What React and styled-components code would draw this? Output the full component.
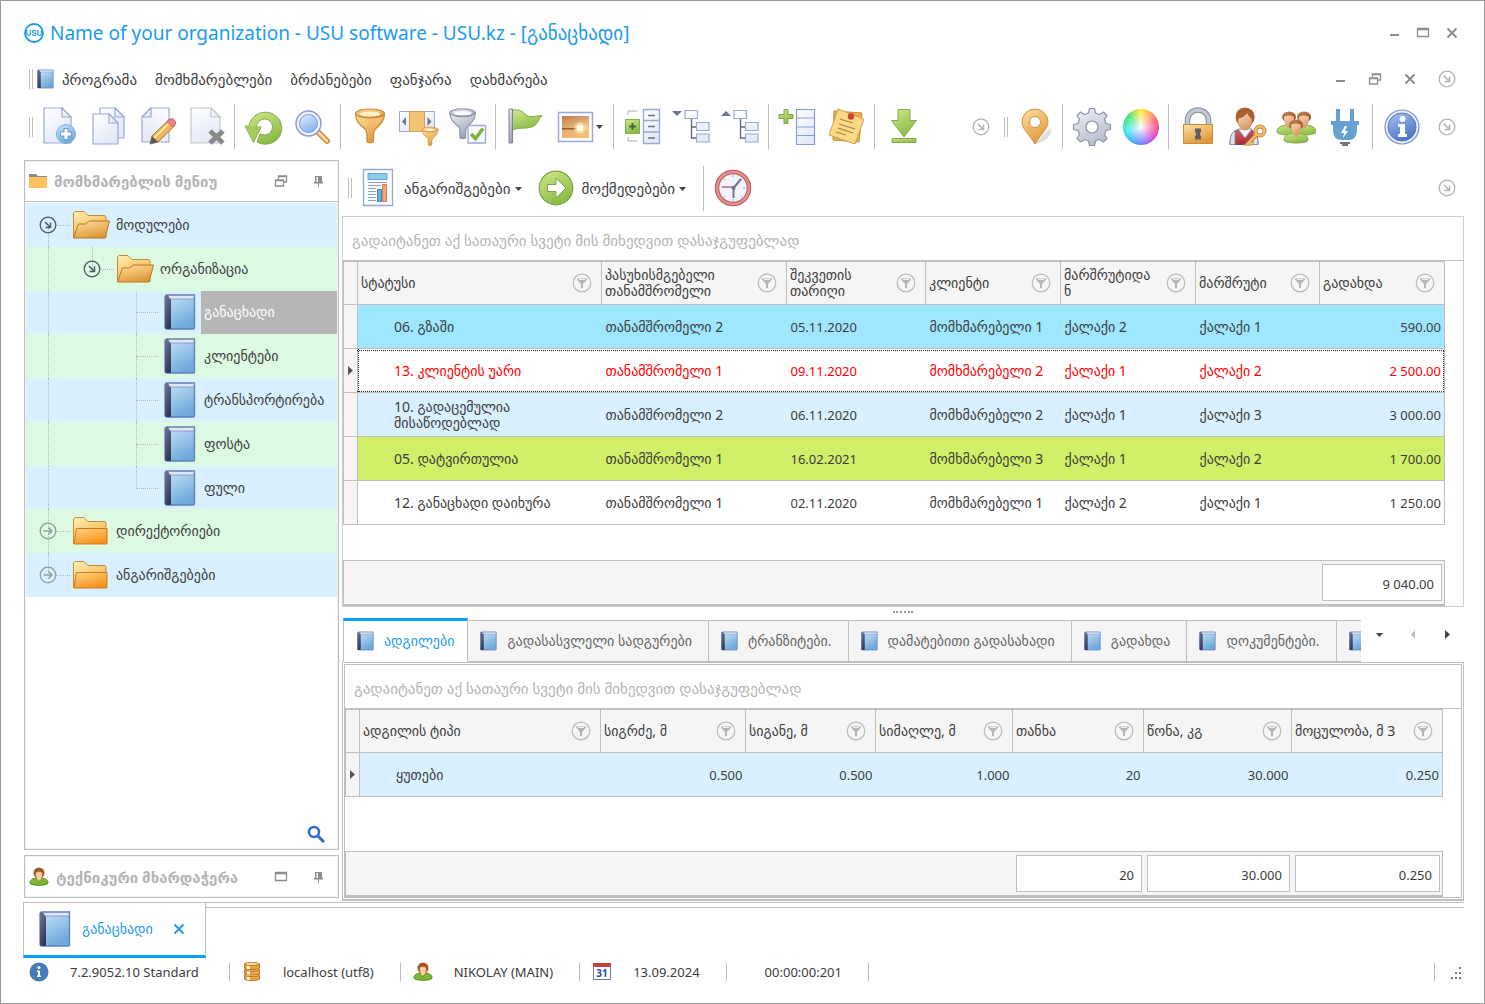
import React from 'react'
import styled, { createGlobalStyle, css } from 'styled-components'

const color = {
  text: '#3c3c3c',
  muted: '#b4b4b4',
  icon: '#8c8c8c',
  line: '#bfbfbf',
  accent: '#00a2ff',
  accentText: '#1b9cf0',
  bar: '#f5f5f5',
  blueRow: '#d8f0ff',
  greenRow: '#dcfae2'
}

const size = {
  number: '13px',
  label: '14px',
  menu: '15px'
}

const GlobalStyle = createGlobalStyle`
  * { box-sizing: border-box; }
  body {
    margin: 0;
    background: #fff;
    color: ${color.text};
    font: ${size.number}/16px "Noto Sans", "DejaVu Sans", sans-serif;
  }
  button {
    margin: 0;
    padding: 0;
    border: 0;
    background: none;
    color: inherit;
    font: inherit;
    white-space: nowrap;
  }
  svg { display: block; flex: none; }
`

/* ---------- icons ---------- */

const gradients = {
  page: ['#ffffff', '#e3e9f7'],
  blue: ['#cbe7fa', '#6fa8da'],
  glass: ['#e4f1ff', '#86b5f0'],
  spine: ['#6f7898', '#33395c'],
  orange: ['#ffe0a0', '#e09a3c'],
  folder: ['#ffd584', '#f7931e'],
  back: ['#fff0b8', '#f0b040'],
  green: ['#cfe890', '#8dbb45'],
  gray: ['#eef0f5', '#9aa1b2'],
  gear: ['#eef1f6', '#b9c0cd'],
  info: ['#a9c2ee', '#4f78c8'],
  photo: ['#c07850', '#ffe09a'],
  skin: ['#f7d9b6', '#d99a68'],
  hair: ['#c98a55', '#8c4a22'],
  red: ['#d8606a', '#a82c38']
}

const Defs = () => (
  <svg width='0' height='0' aria-hidden='true' style={{ position: 'absolute' }}>
    <defs>
      {Object.entries(gradients).map(([id, [from, to]]) => (
        <linearGradient key={id} id={id} x1='0' y1='0' x2='0.5' y2='1'>
          <stop offset='0' stopColor={from} />
          <stop offset='1' stopColor={to} />
        </linearGradient>
      ))}
    </defs>
  </svg>
)

const Icon = ({ w = 40, h = w, box = `0 0 ${w} ${h}`, children }) => (
  <svg width={w} height={h} viewBox={box} fill='none' aria-hidden='true'>{children}</svg>
)

const Page = ({ x = 4, y = 1, w = 27, h = 35, stroke = '#9ba8d3' }) => (
  <g fill='url(#page)' stroke={stroke} strokeWidth='1.2' strokeLinejoin='round'>
    <path d={`M${x} ${y}h${w - 9}l9 9v${h - 9}h${-w}z`} />
    <path d={`M${x + w - 9} ${y}v9h9z`} />
  </g>
)

const Funnel = ({ fill = 'url(#orange)', rim = '#fff0cc', stroke = '#c98a3a', transform }) => (
  <g transform={transform} stroke={stroke} strokeWidth='1.2' strokeLinejoin='round'>
    <path d='M5.500 7C5.500 14 10 18 15 22C17 24 17 26 17 34C17 36.500 23.500 36.500 23.500 34C23.500 26 23.500 24 25.500 22C30.500 18 34.500 14 34.500 7z' fill={fill} />
    <ellipse cx='20' cy='6.500' rx='14.500' ry='4.500' fill={fill} />
    <ellipse cx='20' cy='7' rx='10.500' ry='2.500' fill={rim} stroke='none' />
  </g>
)

const AddIcon = () => (
  <Icon>
    <Page />
    <circle cx='26' cy='27' r='9.500' fill='url(#blue)' stroke='#7fb0de' />
    <path d='M26 21v12M20 27h12' stroke='#6f9fd0' strokeWidth='5' />
    <path d='M26 22v10M21 27h10' stroke='#fff' strokeWidth='3' />
  </Icon>
)
const CopyIcon = () => (
  <Icon><Page x={11} y={1} w={24} h={30} /><Page x={4} y={7} w={25} h={30} /></Icon>
)
const EditIcon = () => (
  <Icon>
    <g transform='translate(36 0) scale(-1 1)'><Page x={5} y={1} w={27} h={34} /></g>
    <path d='M12 37l2-8l17-16.500l6 6L20 35z' fill='#f0b35c' stroke='#b07a35' />
    <path d='M16 31L33 14.500' stroke='#ffe2a0' strokeWidth='2' />
    <path d='M12 37l2-8l6 6z' fill='#555a66' />
    <path d='M29 14.500l4-3c3 0 5 3 4.500 5.500l-3 3z' fill='#e8848a' stroke='#c4636a' />
  </Icon>
)
const DeleteIcon = () => (
  <Icon>
    <Page x={4} y={1} w={29} h={35} stroke='#c6c6c6' />
    <path d='M23 24l13 12M36 24L23 36' stroke='#8a8a8a' strokeWidth='5' />
  </Icon>
)
const RefreshIcon = () => (
  <Icon>
    <path d='M13 35A16.500 16 0 1 0 5 19H1L9.500 35.500L17 20H12.500A8 8 0 1 1 20.500 28L16 27z' fill='url(#green)' stroke='#86ab4a' strokeLinejoin='round' />
    <path d='M1.500 19.500h15L9.500 35z' fill='#a6ca60' />
  </Icon>
)
const SearchIcon = () => (
  <Icon>
    <path d='M26 26l8 8' stroke='#c98a3a' strokeWidth='6' strokeLinecap='round' />
    <path d='M26 26l8 8' stroke='#ffd89a' strokeWidth='3' strokeLinecap='round' />
    <circle cx='15.500' cy='16.500' r='12.500' fill='#eef2fb' stroke='#8f9ccb' strokeWidth='1.500' />
    <circle cx='15.500' cy='16.500' r='9' fill='url(#glass)' stroke='#7e9bd8' />
  </Icon>
)
const FilterIcon = () => <Icon><Funnel /></Icon>
const ColumnFilterIcon = () => (
  <Icon>
    <path d='M.500 4.500h35v20H.500z' fill='url(#page)' stroke='#9ba8d3' />
    <path d='M10.500 4.500h15v20h-15z' fill='#f3c377' stroke='#d8a050' />
    <path d='M7 10v9l-4-4.500zM28.500 10v9l4-4.500z' fill='#6e7388' />
    <Funnel transform='translate(20 19) scale(.55)' />
  </Icon>
)
const FilterCheckIcon = () => (
  <Icon>
    <Funnel fill='url(#gray)' rim='#fafbff' stroke='#8990a3' transform='translate(-3 0) scale(.88)' />
    <path d='M20 18.500h17.500v17.500H20z' fill='#f8faff' stroke='#9ba8d3' strokeWidth='1.300' />
    <path d='M23 27l4.500 4.500L35 21.500' stroke='#7eb338' strokeWidth='3.500' />
  </Icon>
)
const FlagIcon = () => (
  <Icon>
    <path d='M6 3.500c3-1 6-1 9 0c6 3 6 6 11 6c5 0 8-1 11-1c-4 4-4 9-9 11c-7 3-12 0-22 4z' fill='url(#green)' stroke='#86ab4a' />
    <path d='M4 2h3.500v34H4z' fill='url(#gray)' stroke='#7a8293' />
  </Icon>
)
const PhotoIcon = () => (
  <Icon>
    <path d='M2.500 5.500h34v29h-34z' fill='#fbfcff' stroke='#9ba8d3' strokeWidth='1.400' />
    <path d='M6 9h27v22H6z' fill='url(#photo)' />
    <path d='M6 21h14l3 1.500H6z' fill='#6b3c28' opacity='.700' />
    <path d='M6 23h27v8H6z' fill='#eda860' opacity='.600' />
    <circle cx='24' cy='21' r='6' fill='#ffeab0' opacity='.600' />
    <circle cx='24' cy='21' r='3.500' fill='#fffbe6' />
  </Icon>
)
const ExpandColumnsIcon = () => (
  <Icon>
    <path d='M5 8V4h9M5 30v4h9' stroke='#a4a9b8' />
    <path d='M2.500 12.500h14v14h-14z' fill='url(#green)' stroke='#86ab4a' />
    <path d='M9.500 16v7M6 19.500h7' stroke='#42702a' strokeWidth='2' />
    <path d='M20.500 2.500h16v34h-16zM20.500 13.500h16M20.500 25h16' fill='url(#page)' stroke='#9ba8d3' strokeWidth='1.300' />
    <path d='M25 8.500h7M25 19.500h7M25 31h7' stroke='#6e7388' strokeWidth='1.600' />
  </Icon>
)
const TreeIcon = ({ up }) => (
  <Icon>
    <path d={up ? 'M0 9l5-5l5 5z' : 'M0 4h10L5 9z'} fill='#6e7388' />
    <path d='M19.500 11v20h6M19.500 20h6' stroke='#5e6478' strokeWidth='1.300' />
    <g fill='url(#page)' stroke='#9ba8d3' strokeWidth='1.200'>
      <path d='M13 3.500h12.500v8H13zM24.500 15.500H37v8H24.500zM24.500 27H37v8H24.500z' />
    </g>
  </Icon>
)
const AddRowsIcon = () => (
  <Icon>
    <path d='M6 2.500h4v5h5v4h-5v5H6v-5H1v-4h5z' fill='url(#green)' stroke='#7ea53f' />
    <path d='M18.500 2.500h18v35h-18zM18.500 11h18M18.500 20h18M18.500 28.500h18' fill='url(#page)' stroke='#8d9bd0' strokeWidth='1.200' />
  </Icon>
)
const NotesIcon = () => (
  <Icon>
    <path d='M7 4l28 2l-3 29l-26-2z' fill='#e9ad58' stroke='#c88b3a' />
    <path d='M11 2l26 10l-9 25L2 28z' fill='#fbd985' stroke='#d7a046' />
    <path d='M13 12l13 4M12 17l16 5M11 21l15 5M9 25l10 3' stroke='#a58542' strokeWidth='1.300' />
    <circle cx='24' cy='9.500' r='3.200' fill='#cc4438' />
  </Icon>
)
const DownloadIcon = () => (
  <Icon>
    <path d='M14 2.500h12v11h6.500L20 30L7.500 13.500H14z' fill='url(#green)' stroke='#86ab4a' />
    <path d='M8 31.500h24v4H8z' fill='url(#green)' stroke='#86ab4a' />
  </Icon>
)
const PinIcon = () => (
  <Icon>
    <path d='M20 37c12-2 18-10 15-16z' fill='#ddd' />
    <path d='M20 37C14 27 7 22 7 15a13 13 0 0 1 26 0c0 7-7 12-13 22z' fill='url(#orange)' stroke='#cf9648' />
    <circle cx='20' cy='15' r='5.500' fill='#fff' stroke='#cf9648' />
  </Icon>
)
const GearIcon = () => (
  <Icon>
    <path
      d='M16.500 6l1-4.500h5l1 4.500l4 1.500l4-2.500l3.500 3.500l-2.500 4l1.500 4l4.500 1v5l-4.500 1l-1.500 4l2.500 4l-3.500 3.500l-4-2.500l-4 1.500l-1 4.500h-5l-1-4.500l-4-1.500l-4 2.500L5 31.500l2.500-4l-1.500-4l-4.500-1v-5l4.500-1l1.500-4l-2.500-4L8.500 5l4 2.500z'
      fill='url(#gear)' stroke='#8d95a8' strokeWidth='1.200' strokeLinejoin='round'
    />
    <circle cx='20' cy='20' r='6' fill='#fff' stroke='#8d95a8' strokeWidth='1.200' />
  </Icon>
)
const LockIcon = () => (
  <Icon>
    <path d='M9.500 18v-5a10.500 10 0 0 1 21 0v5' stroke='#808894' strokeWidth='5.500' />
    <path d='M9.500 18v-5a10.500 10 0 0 1 21 0v5' stroke='#c3c9d2' strokeWidth='3.500' />
    <path d='M5.500 17.500h29v19h-29z' fill='url(#orange)' stroke='#c98a3a' />
    <path d='M17 21.500h6v4h-1v3h1v4h-6v-4h1v-3h-1z' fill='#5d6068' />
  </Icon>
)
const UserKeyIcon = () => (
  <Icon>
    <path d='M3 37.500c0-10 4-14 9-15h10c6 1 9 6 9 15z' fill='url(#red)' stroke='#6e5050' />
    <path d='M3 37.500c0-9 2-12 5-14v14zM31 37.500c0-9-2-12-4-13l-1 13z' fill='#dfe2ec' stroke='#8d92a3' />
    <path d='M11 22h14l-7 9z' fill='#f7f8fc' stroke='#9096a5' />
    <ellipse cx='18' cy='10' rx='9.500' ry='9.500' fill='url(#hair)' />
    <ellipse cx='18' cy='14' rx='7' ry='9' fill='url(#skin)' stroke='#b9784a' strokeWidth='.600' />
    <path d='M10 12c3-1 8-2 10-6c1 3 4 5 7 7c2-8-3-12-9-12s-10 4-8 11z' fill='#a9602f' />
    <circle cx='33' cy='24' r='4.500' stroke='#c08030' strokeWidth='4' />
    <path d='M30 27l-9 9.500h5' stroke='#c08030' strokeWidth='4' />
    <circle cx='33' cy='24' r='4.500' stroke='#f2bd6a' strokeWidth='2.500' />
    <path d='M30 27l-9 9.500h5' stroke='#f2bd6a' strokeWidth='2.500' />
  </Icon>
)
const Person = ({ x, y }) => (
  <g transform={`translate(${x} ${y})`}>
    <path d='M-12 17c0-5 5-7 12-7s12 2 12 7c0 4-24 4-24 0z' fill='url(#green)' stroke='#84a94a' />
    <ellipse cx='0' cy='2' rx='7' ry='5.500' fill='url(#hair)' />
    <path d='M-5 2c3-2 7-2 10 0c0 6-2 11-5 11s-5-5-5-11z' fill='url(#skin)' />
  </g>
)
const UsersIcon = () => (
  <Icon><Person x={13} y={8} /><Person x={28} y={8} /><Person x={20} y={16} /></Icon>
)
const PlugIcon = () => (
  <Icon>
    <path d='M11 2h4v12h10V2h4v12h5v4h-2v5c0 7-4 10-8 10h-8c-4 0-8-3-8-10v-5H6v-4h5z' fill='#66a1d2' />
    <path d='M15 35h10v2h-2v2h-6v-2h-2z' fill='#6e7580' />
    <path d='M20 19l-4 7h3l-1 5l5-7h-3l2-5z' fill='#fff' />
  </Icon>
)
const InfoIcon = () => (
  <Icon>
    <circle cx='20' cy='20' r='17' fill='#e9eefb' stroke='#7f92cc' strokeWidth='1.200' />
    <circle cx='20' cy='20' r='14' fill='url(#info)' stroke='#5474bd' />
    <circle cx='20.500' cy='12' r='3' fill='#fff' />
    <path d='M16 17h7v10h2v3h-9v-3h2v-7h-2z' fill='#fff' />
  </Icon>
)
const ReportIcon = () => (
  <Icon>
    <path d='M5.500 1.500h29v36h-29z' fill='#fafcff' stroke='#93a7d8' strokeWidth='1.300' />
    <path d='M10 5.500h19v6H10z' fill='#8ecbe8' stroke='#68a8d0' />
    <path d='M10 14.500h19M10 17.500h13M10 20.500h8M10 23.500h8M10 26.500h8M10 29.500h8M10 32.500h8' stroke='#93a3c8' />
    <path d='M19.500 21.500h4v12h-4z' fill='#6bb0dc' stroke='#3f86bd' />
    <path d='M24.500 16.500h4v17h-4z' fill='#f2a57c' stroke='#d9804f' />
  </Icon>
)
const ActionIcon = () => (
  <Icon>
    <circle cx='20' cy='20' r='16.800' fill='url(#green)' stroke='#7ea53f' strokeWidth='1.200' />
    <path d='M11.500 16.500h8.500v-6.500L30 20L20 30v-6.500h-8.500z' fill='#fff' stroke='#79a83c' />
  </Icon>
)
const ClockIcon = () => (
  <Icon>
    <circle cx='20' cy='20' r='16' fill='#f1f5fb' stroke='#b9595a' strokeWidth='4.500' />
    <circle cx='20' cy='20' r='16' stroke='#e58f8d' strokeWidth='2.500' />
    <path d='M20 7v2M20 31v2M32 20h-2M29 11l-1 1M11 11l1 1M11 29l1-1M29 29l-1-1' stroke='#9aa5bb' />
    <path d='M20.500 30V20L28 11' stroke='#6a7690' strokeWidth='2' />
    <path d='M9 19h12' stroke='#c8686a' strokeWidth='1.500' />
    <circle cx='20.500' cy='20' r='2' fill='#6a7690' />
  </Icon>
)

const Book = ({ w = 32, h = 36 }) => (
  <Icon w={w} h={h} box='0 0 32 36'>
    <path d='M3 1h27.500v33c0 1-.500 1-1 1H3c-1.500 0-2-1-2-2V3c0-1 .500-2 2-2z' fill='url(#blue)' stroke='#5b82ba' strokeWidth='1.300' />
    <path d='M3 1h4v34H3c-1.500 0-2-1-2-2V3c0-1 .500-2 2-2z' fill='url(#spine)' />
    <path d='M4 1.500h26v3.500H6z' fill='#e1e8f5' stroke='#7d8fb8' strokeWidth='.800' />
  </Icon>
)
const FolderIcon = ({ open }) => (
  <Icon w={38} h={30}>
    <path d='M.500 27.500V3L2 1.500h9l4 4h17l1 1.500v20.500z' fill='url(#back)' stroke='#c98a34' />
    {open
      ? <path d='M.500 28l5-14h7l4-3h20L32 28z' fill='url(#orange)' stroke='#b9741f' strokeLinejoin='round' />
      : <path d='M3.500 12.500h30.500v15.500H1z' fill='url(#folder)' stroke='#c97a1c' strokeLinejoin='round' />}
  </Icon>
)
const SmallFolder = () => (
  <Icon w={18} h={14}>
    <path d='M0 0h7l2 2h9v2H0z' fill='#8b8b8b' />
    <path d='M0 3h18v11H0z' fill='#ffc25c' />
  </Icon>
)
const UserIcon = () => (
  <Icon w={20} h={20}>
    <path d='M1 16c0-4 4-5 9-5s9 1 9 5c0 3-18 3-18 0z' fill='#7cb82f' stroke='#4e8a1e' />
    <ellipse cx='10' cy='6' rx='5.500' ry='5.500' fill='#a5561f' />
    <path d='M6.500 6c2-2 5-2 7 0c0 4-1.500 8-3.500 8s-3.500-4-3.500-8z' fill='#f4cfa0' stroke='#a5561f' strokeWidth='.600' />
  </Icon>
)
const DatabaseIcon = () => (
  <Icon w={20} h={20}>
    {[13, 7.500, 2].map((y) => (
      <g key={y} stroke='#a8641c' strokeWidth='.800'>
        <path d={`M2.500 ${y}v4c0 2 15 2 15 0v-4z`} fill='#eea23e' />
        <path d={`M5 ${y + 1}v4h3v-4z`} fill='#fff3d0' stroke='none' />
        <ellipse cx='10' cy={y} rx='7.500' ry='1.600' fill='#fbdc98' />
      </g>
    ))}
  </Icon>
)
const CalendarIcon = () => (
  <Icon w={20} h={20}>
    <path d='M1.500 1.500h17v16h-17z' fill='#fff' stroke='#6c7ea8' />
    <path d='M1 1h18v4H1z' fill='#c8403a' />
    <text x='10' y='15' textAnchor='middle' fontSize='10' fontWeight='700' fill='#1e4a9c'>31</text>
  </Icon>
)
const StatusInfo = () => (
  <Icon w={20} h={20}>
    <circle cx='10' cy='10' r='9.500' fill='#447bb8' />
    <circle cx='10' cy='5.500' r='1.500' fill='#fff' />
    <path d='M8 8.500h3v5h1v1.500H8v-1.500h1V10H8z' fill='#fff' />
  </Icon>
)
const Logo = () => (
  <Icon w={20} h={20}>
    <circle cx='10' cy='10' r='9' stroke='#1b9cec' strokeWidth='1.800' />
    <text x='10' y='13' textAnchor='middle' fontSize='8' fontWeight='700' fill='#1b9cec' fontFamily='Inter'>USU</text>
  </Icon>
)
const FunnelMark = () => (
  <Icon w={20} h={20}>
    <circle cx='10' cy='10' r='8.800' stroke='#b9b9b9' strokeWidth='1.200' />
    <path d='M5 5.500h10v1l-4 4.500v4h-2v-4l-4-4.500z' fill='#b4b4b4' />
    <path d='M7 6.500h6' stroke='#eee' />
  </Icon>
)
const RoundArrow = ({ tone = '#b4b4b4', right }) => (
  <Icon w={18}>
    <circle cx='9' cy='9' r='7.800' stroke={tone} strokeWidth='1.300' />
    <path d={right ? 'M4.500 9h8.500M9.500 5.500l3.500 3.500l-3.500 3.500' : 'M6 6l5.500 5.500M11.500 6.500v5h-5'} stroke={tone} strokeWidth='1.500' />
  </Icon>
)
const MinimizeIcon = () => <Icon w={14}><path d='M3 9h9' stroke={color.icon} strokeWidth='2' /></Icon>
const MaximizeIcon = () => <Icon w={14}><path d='M1.500 2.500h11v8h-11zM1 3.500h12' stroke={color.icon} strokeWidth='1.300' /></Icon>
const RestoreIcon = () => (
  <Icon w={14}><path d='M4.500 5V2h8v6h-3M1.500 6h8v6h-8zM4 2.500h9M1 6.500h9' stroke={color.icon} strokeWidth='1.300' /></Icon>
)
const CloseIcon = ({ tone = color.icon }) => (
  <Icon w={14}><path d='M2.500 2.500l9 9M11.500 2.500l-9 9' stroke={tone} strokeWidth='2' /></Icon>
)
const PushPinIcon = () => (
  <Icon w={14}>
    <path d='M4 2h7v6H4zM3 8h9v1.500H3zM7 9h1v4H7z' fill={color.icon} />
    <path d='M5.500 3H7v5H5.500z' fill='#fff' />
  </Icon>
)
const FindIcon = () => (
  <Icon w={18}>
    <circle cx='7' cy='7' r='5' stroke='#2f6bc9' strokeWidth='2.500' />
    <path d='M11 11l6 6' stroke='#2f6bc9' strokeWidth='3' />
  </Icon>
)
const Caret = ({ dir = 'down', tone = '#444' }) => {
  const d = { down: 'M0 3h7L3.500 7z', left: 'M5 0v9L1 4.500z', right: 'M1 0v9l5-4.500z' }[dir]
  return <Icon w={7} h={9}><path d={d} fill={tone} /></Icon>
}
const SizeGrip = () => (
  <Icon w={16}>
    <path d='M11 3h2v2h-2zM7 8h2v2H7zM11 8h2v2h-2zM3 13h2v2H3zM7 13h2v2H7zM11 13h2v2h-2z' fill='#777' />
  </Icon>
)

/* ---------- frame and bars ---------- */

const StyledWindow = styled.div`
  display: flex;
  flex-direction: column;
  min-height: 100vh;
  padding: 0 20px 17px 23px;
  border: 1px solid #9a9a9a;
`

const StyledTitleBar = styled.header`
  display: flex;
  align-items: center;
  gap: 6px;
  height: 64px;
  padding-right: 5px;
`

const StyledTitle = styled.h1`
  flex: 1;
  margin: 0;
  color: ${color.accentText};
  font-size: 19px;
  line-height: 24px;
  font-weight: 400;
  white-space: nowrap;
`

const StyledWindowButtons = styled.div`
  display: flex;
  align-items: center;
  gap: ${({ gap }) => gap || 15}px;
`

const StyledBar = styled.div`
  display: flex;
  align-items: center;
  height: ${({ height }) => height}px;
  padding-left: ${({ indent }) => indent || 5}px;
  padding-right: 8px;
`

const StyledGrip = styled.span`
  flex: none;
  width: 4px;
  height: 20px;
  border: solid ${color.line};
  border-width: 0 1px;
`

const StyledSeparator = styled.span`
  flex: none;
  width: 1px;
  height: 45px;
  margin: 0 4px 0 3px;
  background: ${color.line};
`

const StyledMenu = styled.nav`
  display: flex;
  flex: 1;
  gap: 18px;
  margin-left: 8px;
  font-size: ${size.menu};
`

const StyledTool = styled.button`
  display: flex;
  flex: none;
  align-items: center;
  justify-content: center;
  width: ${({ wide }) => (wide ? 61 : 49)}px;
  height: 46px;
`

const StyledToolGroup = styled.div`
  display: flex;
  align-items: center;
  padding-left: ${({ gap = 2 }) => gap}px;
  ${({ grow }) => grow && css`flex: 1;`}
`

const StyledAction = styled.button`
  display: flex;
  align-items: center;
  gap: 6px;
  margin-right: 14px;
  font-size: ${size.menu};
`

const StyledActionLabel = styled.span`
  display: flex;
  align-items: center;
  gap: 4px;
`

const StyledWheel = styled.span`
  width: 36px;
  height: 36px;
  border-radius: 50%;
  background:
    radial-gradient(circle, #fff 0, rgba(255, 255, 255, 0.6) 25%, rgba(255, 255, 255, 0) 70%),
    conic-gradient(#ffe83a, #ff5a6e 70deg, #e83ab8 120deg, #a85cf0 150deg, #4a9cf8 200deg, #2fe8f0 255deg, #3fe070 310deg, #ffe83a);
`

/* ---------- sidebar ---------- */

const StyledMain = styled.main`
  display: grid;
  grid-template-columns: 315px minmax(0, 1fr);
  gap: 3px;
  flex: 1;
`

const StyledSidebar = styled.aside`
  display: flex;
  flex-direction: column;
  gap: 5px;
  padding-bottom: 3px;
`

const StyledPanel = styled.section`
  display: flex;
  flex-direction: column;
  border: 1px solid ${color.line};
  box-shadow: inset 0 0 0 1px #f2f2f2;
  ${({ grow }) => grow && css`flex: 1;`}
`

const StyledPanelHeader = styled.header`
  display: flex;
  align-items: center;
  gap: 7px;
  height: 41px;
  padding: 0 13px 0 4px;
  ${({ ruled }) => ruled && css`border-bottom: 1px solid ${color.line};`}
`

const StyledPanelTitle = styled.h2`
  flex: 1;
  margin: 0;
  color: ${color.muted};
  font-size: ${size.menu};
  font-weight: 700;
  white-space: nowrap;
`

const StyledTree = styled.ul`
  display: grid;
  grid-auto-rows: 1fr;
  height: 394px;
  margin: 1px 1px 0;
  padding: 0;
  font-size: ${size.label};
  list-style: none;
`

const StyledTreeRow = styled.li`
  display: flex;
  align-items: stretch;
  background: ${({ index }) => (index % 2 ? color.greenRow : color.blueRow)};
`

const StyledGuide = styled.span`
  position: relative;
  display: flex;
  flex: none;
  align-items: center;
  justify-content: center;
  width: 44px;

  &::before {
    content: '';
    position: absolute;
    left: 22px;
    top: ${({ first }) => (first ? '50%' : 0)};
    bottom: ${({ last }) => (last ? '50%' : 0)};
    ${({ line }) => line && css`border-left: 1px dotted #b8b8b8;`}
  }

  &::after {
    content: '';
    position: absolute;
    top: 50%;
    left: ${({ node }) => (node ? 30 : 22)}px;
    right: 0;
    ${({ branch }) => branch && css`border-top: 1px dotted #b8b8b8;`}
  }

  svg {
    position: relative;
  }
`

const StyledNode = styled.button`
  display: flex;
  flex: 1;
  align-items: center;
`

const StyledNodeIcon = styled.span`
  display: flex;
  justify-content: center;
  width: 43px;
`

const StyledNodeLabel = styled.span`
  display: flex;
  flex: 1;
  align-items: center;
  align-self: stretch;
  padding-left: 3px;
  ${({ selected }) => selected && css`
    background: #b6b6b6;
    color: #fff;
  `}
`

const StyledSearchButton = styled.button`
  align-self: flex-end;
  margin: auto 13px 6px 0;
`

/* ---------- data grids ---------- */

const StyledContent = styled.div`
  display: flex;
  flex-direction: column;
  min-width: 0;
`

const StyledGrid = styled.section`
  display: flex;
  flex-direction: column;
  height: ${({ height }) => height}px;
  border: 1px solid ${({ inner }) => (inner ? color.line : '#cfcfcf')};
`

const StyledGroupHint = styled.p`
  display: flex;
  flex: none;
  align-items: center;
  height: 44px;
  margin: 0;
  padding: 2px 9px 0;
  border-bottom: 1px solid ${color.line};
  color: ${color.muted};
  font-size: ${size.menu};
`

const StyledGridBody = styled.div`
  display: flex;
  flex: 1;
  flex-direction: column;
  justify-content: space-between;
  padding-right: 18px;
`

const StyledTable = styled.table`
  width: 100%;
  table-layout: fixed;
  border-collapse: collapse;
  border: 1px solid ${color.line};
  border-top-color: #aaa;
  font-size: ${size.label};
`

const StyledTh = styled.th`
  height: 43px;
  padding: 0 9px 0 3px;
  border: 1px solid ${color.line};
  background: ${color.bar};
  font-weight: 400;
  text-align: left;
`

const StyledThContent = styled.div`
  display: flex;
  align-items: center;
  justify-content: space-between;
  gap: 10px;
  overflow-wrap: anywhere;
`

const StyledMarker = styled.td`
  position: relative;
  z-index: 1;
  padding: 0 0 0 3px;
  border: 1px solid ${color.line};
  background: ${color.bar};
`

const StyledTd = styled.td`
  padding: 0 3px 0 ${({ first }) => (first ? 36 : 4)}px;
  font-size: ${({ plain, numeric }) => (plain || numeric ? size.number : size.label)};
  text-align: ${({ numeric }) => (numeric ? 'right' : 'left')};
`

const StyledTr = styled.tr`
  height: 44px;
  background: ${({ fill }) => fill};
  color: ${({ ink }) => ink || color.text};
  border-bottom: 1px solid ${color.line};
  ${({ current }) => current && css`
    outline: 1px dotted #222;
    outline-offset: -2px;

    ${StyledMarker} + td {
      background: repeating-linear-gradient(#222 0 1px, #fff 1px 2px) 0 0 / 1px 100% no-repeat;
    }
  `}
`

const StyledSummary = styled.div`
  display: flex;
  justify-content: flex-end;
  gap: 5px;
  height: 46px;
  padding: 3px 2px;
  border: 1px solid ${color.line};
  border-bottom-width: 2px;
  background: ${color.bar};
`

const StyledTotal = styled.output`
  width: ${({ width }) => width}px;
  padding-right: 7px;
  border: 1px solid ${color.line};
  background: #fff;
  line-height: 38px;
  text-align: right;
`

const StyledSplitter = styled.div`
  height: 11px;
  flex: none;
  display: flex;
  justify-content: center;

  &::before {
    content: '';
    width: 20px;
    margin-top: 4px;
    border-top: 2px dotted #999;
  }
`

/* ---------- tabs ---------- */

const StyledTabBar = styled.div`
  display: flex;
  flex: none;
  align-items: flex-end;
  height: 44px;
  padding-left: 1px;
`

const StyledTabs = styled.div`
  display: flex;
  flex: 1;
  align-items: flex-end;
  overflow: hidden;
`

const StyledTab = styled.button`
  display: flex;
  flex: none;
  align-items: center;
  gap: 10px;
  height: 42px;
  padding: 0 16px 0 12px;
  border: solid ${color.line};
  border-width: 1px 1px 1px 0;
  background: ${color.bar};
  color: #666;
  font-size: ${size.label};
  ${({ active }) => active && css`
    height: 44px;
    padding: 0 13px;
    border-top: 3px solid ${color.accent};
    border-left-width: 1px;
    border-bottom-color: #fff;
    background: #fff;
    color: ${color.accentText};
  `}
`

const StyledTabArrows = styled.div`
  display: flex;
  gap: 27px;
  align-self: center;
  margin: 0 13px 11px 15px;
`

const StyledTabPage = styled.div`
  flex: 1;
  padding: 1px;
  border: 1px solid ${color.line};
  border-bottom: 2px solid ${color.line};
`

const StyledDocuments = styled.div`
  display: flex;
  margin-left: -1px;
  border-top: 1px solid ${color.line};
  margin-top: 1px;

  &::after {
    content: '';
    flex: 1;
    height: 4px;
    border-bottom: 1px solid ${color.line};
  }
`

const StyledDocumentTab = styled.div`
  display: flex;
  align-items: center;
  gap: 19px;
  height: 55px;
  padding: 0 19px 0 15px;
  border: solid ${color.line};
  border-width: 0 1px;
  border-bottom: 3px solid ${color.accent};
  color: ${color.accentText};
  font-size: ${size.label};
`

const StyledDocumentButton = styled.button`
  display: flex;
  align-items: center;
  gap: 11px;
`

/* ---------- status bar ---------- */

const StyledStatusBar = styled.footer`
  display: flex;
  align-items: center;
  height: 28px;
`

const StyledStatusItem = styled.div`
  display: flex;
  align-items: center;
  gap: 21px;
  height: 18px;
  padding: 0 26px 0 ${({ plain }) => (plain ? 38 : 12)}px;
  border-right: 1px solid ${color.line};
  white-space: nowrap;

  &:first-child {
    padding: 0 30px 0 5px;
  }
`

const StyledStatusEnd = styled.div`
  display: flex;
  align-items: center;
  height: 18px;
  margin-left: auto;
  padding-left: 13px;
  border-left: 1px solid ${color.line};
`

/* ---------- data ---------- */

const menu = ['პროგრამა', 'მომხმარებლები', 'ბრძანებები', 'ფანჯარა', 'დახმარება']

const hint = 'გადაიტანეთ აქ სათაური სვეტი მის მიხედვით დასაჯგუფებლად'

const tree = [
  { label: 'მოდულები', level: 0, open: true, first: true },
  { label: 'ორგანიზაცია', level: 1, open: true },
  { label: 'განაცხადი', level: 2, selected: true },
  { label: 'კლიენტები', level: 2 },
  { label: 'ტრანსპორტირება', level: 2 },
  { label: 'ფოსტა', level: 2 },
  { label: 'ფული', level: 2, last: true },
  { label: 'დირექტორიები', level: 0 },
  { label: 'ანგარიშგებები', level: 0, last: true }
]

const orderColumns = [
  { title: 'სტატუსი' },
  { title: 'პასუხისმგებელი თანამშრომელი', width: 185 },
  { title: 'შეკვეთის თარიღი', width: 139, plain: true },
  { title: 'კლიენტი', width: 135 },
  { title: 'მარშრუტიდან', width: 135 },
  { title: 'მარშრუტი', width: 124 },
  { title: 'გადახდა', width: 125, numeric: true }
]

const orders = [
  { fill: '#9ee7ff', cells: ['06. გზაში', 'თანამშრომელი 2', '05.11.2020', 'მომხმარებელი 1', 'ქალაქი 2', 'ქალაქი 1', '590.00'] },
  { fill: '#fff', ink: '#f00', current: true, cells: ['13. კლიენტის უარი', 'თანამშრომელი 1', '09.11.2020', 'მომხმარებელი 2', 'ქალაქი 1', 'ქალაქი 2', '2 500.00'] },
  { fill: color.blueRow, cells: ['10. გადაცემულია მისაწოდებლად', 'თანამშრომელი 2', '06.11.2020', 'მომხმარებელი 2', 'ქალაქი 1', 'ქალაქი 3', '3 000.00'] },
  { fill: '#d1ef68', cells: ['05. დატვირთულია', 'თანამშრომელი 1', '16.02.2021', 'მომხმარებელი 3', 'ქალაქი 1', 'ქალაქი 2', '1 700.00'] },
  { fill: '#fff', cells: ['12. განაცხადი დაიხურა', 'თანამშრომელი 1', '02.11.2020', 'მომხმარებელი 1', 'ქალაქი 2', 'ქალაქი 1', '1 250.00'] }
]

const placeColumns = [
  { title: 'ადგილის ტიპი' },
  { title: 'სიგრძე, მ', width: 145, numeric: true },
  { title: 'სიგანე, მ', width: 130, numeric: true },
  { title: 'სიმაღლე, მ', width: 137, numeric: true },
  { title: 'თანხა', width: 131, numeric: true },
  { title: 'წონა, კგ', width: 148, numeric: true },
  { title: 'მოცულობა, მ 3', width: 151, numeric: true }
]

const places = [
  { fill: color.blueRow, marked: true, cells: ['ყუთები', '0.500', '0.500', '1.000', '20', '30.000', '0.250'] }
]

const tabs = ['ადგილები', 'გადასასვლელი სადგურები', 'ტრანზიტები.', 'დამატებითი გადასახადი', 'გადახდა', 'დოკუმენტები.']

/* ---------- parts ---------- */

const Tool = ({ name, icon, wide }) => (
  <StyledTool aria-label={name} wide={wide}>
    {icon}
    {wide && <Caret />}
  </StyledTool>
)

const TreeItem = ({ item, index }) => {
  const { label, level, open, selected, first, last } = item
  return (
    <StyledTreeRow index={index}>
      {level > 0 && <StyledGuide line={1} />}
      {level > 1 && <StyledGuide />}
      {level < 2 && (
        <StyledGuide line={1} first={first ? 1 : 0} last={last || level === 1 ? 1 : 0} branch={1} node={1}>
          <RoundArrow right={!open} tone={open ? '#4c5a60' : '#8f9f9f'} />
        </StyledGuide>
      )}
      {level === 2 && <StyledGuide line={1} last={last ? 1 : 0} branch={1} />}
      <StyledNode>
        <StyledNodeIcon>{level === 2 ? <Book /> : <FolderIcon open={open} />}</StyledNodeIcon>
        <StyledNodeLabel selected={selected ? 1 : 0}>{label}</StyledNodeLabel>
      </StyledNode>
    </StyledTreeRow>
  )
}

const DataTable = ({ columns, rows }) => (
  <StyledTable>
    <colgroup>
      <col width='14' />
      {columns.map(({ title, width }) => <col key={title} width={width} />)}
    </colgroup>
    <thead>
      <tr>
        <StyledTh aria-label='row marker' />
        {columns.map(({ title }) => (
          <StyledTh key={title} scope='col'>
            <StyledThContent><span>{title}</span><FunnelMark /></StyledThContent>
          </StyledTh>
        ))}
      </tr>
    </thead>
    <tbody>
      {rows.map(({ cells, fill, ink, current, marked }) => (
        <StyledTr key={cells[0]} fill={fill} ink={ink} current={current ? 1 : 0}>
          <StyledMarker>{(current || marked) && <Caret dir='right' tone='#555' />}</StyledMarker>
          {cells.map((cell, i) => {
            const { title, plain, numeric } = columns[i]
            return (
              <StyledTd key={title} first={i === 0 ? 1 : 0} plain={plain ? 1 : 0} numeric={numeric ? 1 : 0}>
                {cell}
              </StyledTd>
            )
          })}
        </StyledTr>
      ))}
    </tbody>
  </StyledTable>
)

const Sidebar = () => (
  <StyledSidebar>
    <StyledPanel grow>
      <StyledPanelHeader ruled>
        <SmallFolder />
        <StyledPanelTitle>მომხმარებლის მენიუ</StyledPanelTitle>
        <StyledWindowButtons gap={23}>
          <button aria-label='Restore'><RestoreIcon /></button>
          <button aria-label='Pin'><PushPinIcon /></button>
        </StyledWindowButtons>
      </StyledPanelHeader>
      <StyledTree>
        {tree.map((item, index) => <TreeItem key={item.label} item={item} index={index} />)}
      </StyledTree>
      <StyledSearchButton aria-label='Search'><FindIcon /></StyledSearchButton>
    </StyledPanel>
    <StyledPanel>
      <StyledPanelHeader>
        <UserIcon />
        <StyledPanelTitle>ტექნიკური მხარდაჭერა</StyledPanelTitle>
        <StyledWindowButtons gap={23}>
          <button aria-label='Maximize'><MaximizeIcon /></button>
          <button aria-label='Pin'><PushPinIcon /></button>
        </StyledWindowButtons>
      </StyledPanelHeader>
    </StyledPanel>
  </StyledSidebar>
)

const Toolbar = () => (
  <StyledBar height={67}>
    <StyledGrip />
    <StyledToolGroup grow>
      <Tool name='Add' icon={<AddIcon />} />
      <Tool name='Copy' icon={<CopyIcon />} />
      <Tool name='Edit' icon={<EditIcon />} />
      <Tool name='Delete' icon={<DeleteIcon />} />
      <StyledSeparator />
      <Tool name='Refresh' icon={<RefreshIcon />} />
      <Tool name='Search' icon={<SearchIcon />} />
      <StyledSeparator />
      <Tool name='Filter' icon={<FilterIcon />} />
      <Tool name='Column filter' icon={<ColumnFilterIcon />} />
      <Tool name='Apply filter' icon={<FilterCheckIcon />} />
      <StyledSeparator />
      <Tool name='Flag' icon={<FlagIcon />} />
      <Tool name='Picture' icon={<PhotoIcon />} wide={1} />
      <StyledSeparator />
      <Tool name='Expand columns' icon={<ExpandColumnsIcon />} />
      <Tool name='Expand tree' icon={<TreeIcon />} />
      <Tool name='Collapse tree' icon={<TreeIcon up />} />
      <StyledSeparator />
      <Tool name='Add rows' icon={<AddRowsIcon />} />
      <Tool name='Notes' icon={<NotesIcon />} />
      <StyledSeparator />
      <Tool name='Download' icon={<DownloadIcon />} />
    </StyledToolGroup>
    <button aria-label='More'><RoundArrow /></button>
    <StyledToolGroup gap={14}>
      <StyledGrip />
    </StyledToolGroup>
    <StyledToolGroup>
      <Tool name='Map' icon={<PinIcon />} />
      <StyledSeparator />
      <Tool name='Settings' icon={<GearIcon />} />
      <Tool name='Colours' icon={<StyledWheel />} />
      <StyledSeparator />
      <Tool name='Lock' icon={<LockIcon />} />
      <Tool name='User rights' icon={<UserKeyIcon />} />
      <Tool name='Users' icon={<UsersIcon />} />
      <Tool name='Connection' icon={<PlugIcon />} />
      <StyledSeparator />
      <Tool name='Information' icon={<InfoIcon />} />
    </StyledToolGroup>
    <StyledToolGroup gap={12}>
      <button aria-label='More'><RoundArrow /></button>
    </StyledToolGroup>
  </StyledBar>
)

const Content = () => (
  <StyledContent>
    <StyledBar height={56} indent={6}>
      <StyledGrip />
      <StyledToolGroup grow gap={6}>
        <StyledAction>
          <ReportIcon />
          <StyledActionLabel>ანგარიშგებები <Caret /></StyledActionLabel>
        </StyledAction>
        <StyledAction>
          <ActionIcon />
          <StyledActionLabel>მოქმედებები <Caret /></StyledActionLabel>
        </StyledAction>
        <StyledSeparator />
        <Tool name='Reminders' icon={<ClockIcon />} />
      </StyledToolGroup>
      <button aria-label='More'><RoundArrow /></button>
    </StyledBar>
    <StyledGrid height={391}>
      <StyledGroupHint>{hint}</StyledGroupHint>
      <StyledGridBody>
        <DataTable columns={orderColumns} rows={orders} />
        <StyledSummary>
          <StyledTotal width={120}>9 040.00</StyledTotal>
        </StyledSummary>
      </StyledGridBody>
    </StyledGrid>
    <StyledSplitter />
    <StyledTabBar>
      <StyledTabs role='tablist'>
        {tabs.map((tab, i) => (
          <StyledTab key={tab} role='tab' aria-selected={i === 0} active={i === 0 ? 1 : 0}>
            <Book w={17} h={20} />
            {tab}
          </StyledTab>
        ))}
        <StyledTab role='tab' aria-selected={false} aria-label='More'>
          <Book w={17} h={20} />
        </StyledTab>
      </StyledTabs>
      <StyledTabArrows>
        <button aria-label='List of tabs'><Caret /></button>
        <button aria-label='Previous tab'><Caret dir='left' tone='#bbb' /></button>
        <button aria-label='Next tab'><Caret dir='right' /></button>
      </StyledTabArrows>
    </StyledTabBar>
    <StyledTabPage>
      <StyledGrid height={234} inner={1}>
        <StyledGroupHint>{hint}</StyledGroupHint>
        <StyledGridBody>
          <DataTable columns={placeColumns} rows={places} />
          <StyledSummary>
            <StyledTotal width={126}>20</StyledTotal>
            <StyledTotal width={143}>30.000</StyledTotal>
            <StyledTotal width={145}>0.250</StyledTotal>
          </StyledSummary>
        </StyledGridBody>
      </StyledGrid>
    </StyledTabPage>
  </StyledContent>
)

const App = () => (
  <StyledWindow>
    <GlobalStyle />
    <Defs />
    <StyledTitleBar>
      <Logo />
      <StyledTitle>Name of your organization - USU software - USU.kz - [განაცხადი]</StyledTitle>
      <StyledWindowButtons>
        <button aria-label='Minimize'><MinimizeIcon /></button>
        <button aria-label='Maximize'><MaximizeIcon /></button>
        <button aria-label='Close'><CloseIcon /></button>
      </StyledWindowButtons>
    </StyledTitleBar>
    <StyledBar height={28}>
      <StyledGrip />
      <StyledToolGroup grow>
        <StyledToolGroup><Book w={17} h={20} /></StyledToolGroup>
        <StyledMenu>
          {menu.map((item) => <button key={item}>{item}</button>)}
        </StyledMenu>
        <StyledWindowButtons gap={21}>
          <button aria-label='Minimize document'><MinimizeIcon /></button>
          <button aria-label='Restore document'><RestoreIcon /></button>
          <button aria-label='Close document'><CloseIcon /></button>
          <button aria-label='More'><RoundArrow /></button>
        </StyledWindowButtons>
      </StyledToolGroup>
    </StyledBar>
    <Toolbar />
    <StyledMain>
      <Sidebar />
      <Content />
    </StyledMain>
    <StyledDocuments>
      <StyledDocumentTab>
        <StyledDocumentButton><Book />განაცხადი</StyledDocumentButton>
        <button aria-label='Close tab'><CloseIcon tone={color.accentText} /></button>
      </StyledDocumentTab>
    </StyledDocuments>
    <StyledStatusBar>
      <StyledStatusItem><StatusInfo />7.2.9052.10 Standard</StyledStatusItem>
      <StyledStatusItem><DatabaseIcon />localhost (utf8)</StyledStatusItem>
      <StyledStatusItem><UserIcon />NIKOLAY (MAIN)</StyledStatusItem>
      <StyledStatusItem><CalendarIcon />13.09.2024</StyledStatusItem>
      <StyledStatusItem plain={1}>00:00:00:201</StyledStatusItem>
      <StyledStatusEnd><SizeGrip /></StyledStatusEnd>
    </StyledStatusBar>
  </StyledWindow>
)

export default App
